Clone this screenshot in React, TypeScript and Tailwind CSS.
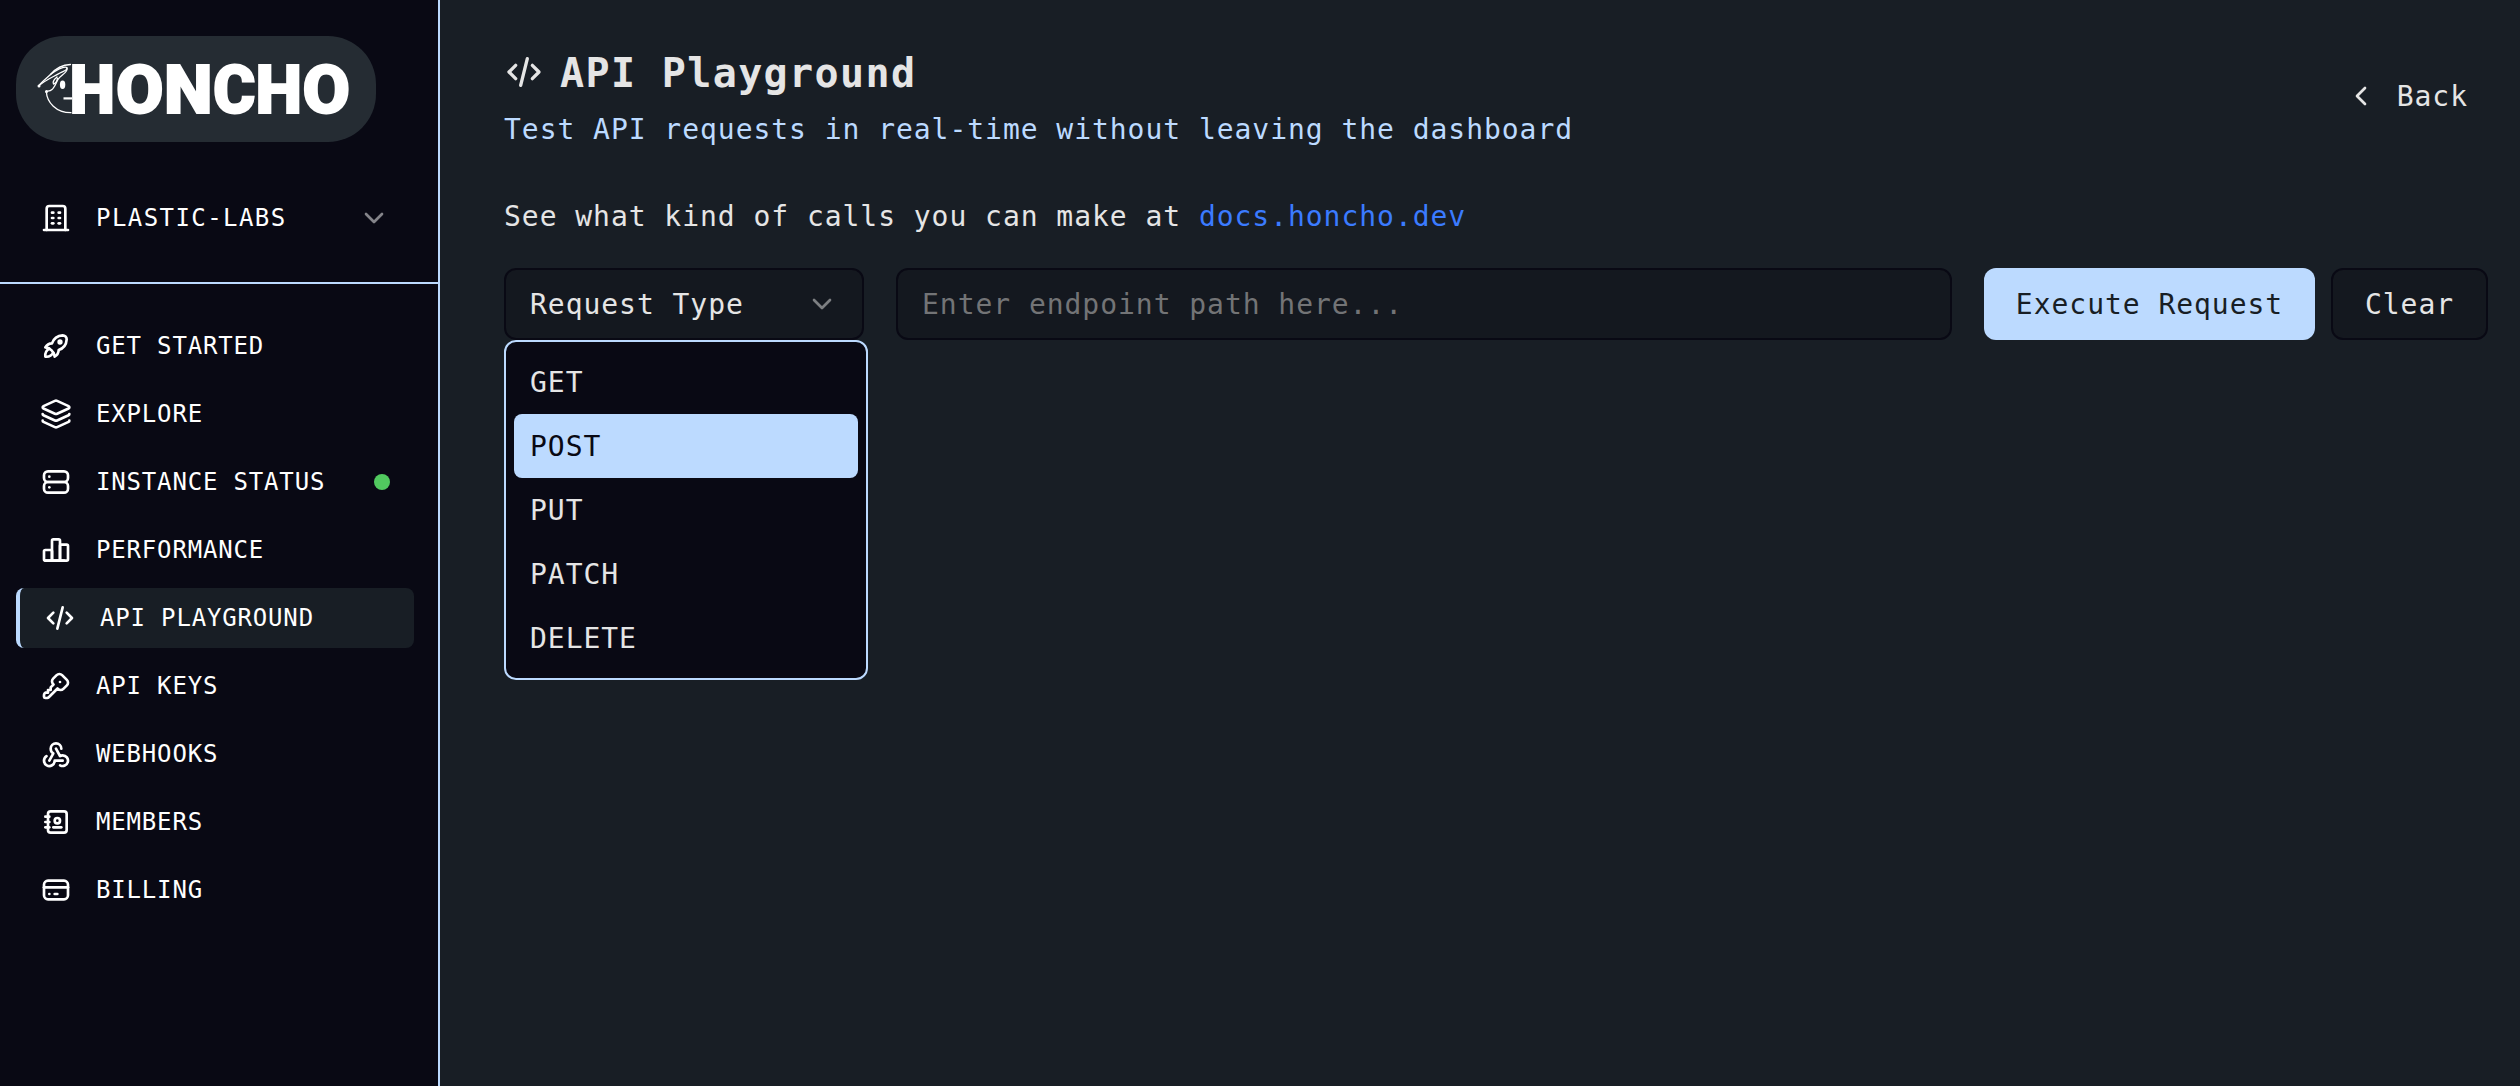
import React from "react";
import { Layers, ChevronDown, ChevronLeft } from "lucide-react";
import {
  TbBuilding,
  TbRocket,
  TbServer,
  TbChartBar,
  TbCode,
  TbKey,
  TbWebhook,
  TbAddressBook,
  TbCreditCard,
} from "react-icons/tb";

const MENU = ["GET", "POST", "PUT", "PATCH", "DELETE"];

type Item = { label: string; icon: React.ReactNode; active?: boolean; dot?: boolean };

const NAV: Item[] = [
  { label: "GET STARTED", icon: <TbRocket size={32} /> },
  { label: "EXPLORE", icon: <Layers size={32} strokeWidth={2} /> },
  { label: "INSTANCE STATUS", icon: <TbServer size={32} />, dot: true },
  { label: "PERFORMANCE", icon: <TbChartBar size={32} /> },
  { label: "API PLAYGROUND", icon: <TbCode size={32} />, active: true },
  { label: "API KEYS", icon: <TbKey size={32} /> },
  { label: "WEBHOOKS", icon: <TbWebhook size={32} /> },
  { label: "MEMBERS", icon: <TbAddressBook size={32} /> },
  { label: "BILLING", icon: <TbCreditCard size={32} /> },
];

const LETTERS = [
  { c: "H", x: 53.5, w: 45.5 },
  { c: "O", x: 100, w: 47.5 },
  { c: "N", x: 148, w: 48.5 },
  { c: "C", x: 197, w: 42.5 },
  { c: "H", x: 239.5, w: 46.5 },
  { c: "O", x: 286.5, w: 47.5 },
];

function Logo() {
  return (
    <svg width="360" height="106" viewBox="0 0 360 106" className="block">
      <g fill="none" stroke="#fff" strokeWidth="1.3" strokeLinecap="round" strokeLinejoin="round">
        <path d="M54.5 28.500C47 28.800 40 32 34.500 38.500C31 42 26 45.500 22.800 49.800" />
        <path d="M22.800 49.800C30 43.500 37 41 44 37C48 34.800 52 34 50.800 31.500C48 29.500 39 35 34.500 38.500" />
        <path d="M51 32C52.500 36.500 44 39.500 42 43.500C40 47 38.500 51.500 36 53.500C34 55.200 32 55 30.300 55.500" />
        <path d="M41 41C38 43.500 36.500 46 37.500 48C39.500 47.500 41 45 41.500 42.500" />
        <path d="M30.300 55.500C31 66.500 40 76.700 55 76.700" />
        <path d="M47.500 62.400H56" strokeWidth="2.200" strokeLinecap="butt" />
      </g>
      <circle cx="23" cy="50" r="1.500" fill="#fff" />
      <circle cx="30.500" cy="55.500" r="1.500" fill="#fff" />
      <ellipse cx="46.600" cy="48.800" rx="2.700" ry="4.200" fill="#fff" />
      <g fill="#fff" stroke="#fff" strokeWidth="1.800" fontFamily="Roboto" fontWeight="900" fontSize="67.500">
        {LETTERS.map((l, i) => (
          <text key={i} x={l.x} y="77" textLength={l.w} lengthAdjust="spacingAndGlyphs">
            {l.c}
          </text>
        ))}
      </g>
    </svg>
  );
}

function Sidebar() {
  return (
    <aside className="flex w-[440px] shrink-0 flex-col border-r-2 border-[#bcdaff] bg-[#090914] text-[24px] text-white">
      <div className="flex h-[284px] shrink-0 flex-col border-b-2 border-[#bcdaff] px-4 pt-9">
        <div className="h-[106px] w-[360px] shrink-0 rounded-[48px] bg-[#252c33]">
          <Logo />
        </div>
        <div className="mt-[46px] flex h-[60px] items-center gap-6 pr-8 pl-6 tracking-[1.43px]">
          <TbBuilding size={32} />
          <span>PLASTIC-LABS</span>
          <ChevronDown size={32} className="ml-auto opacity-50" />
        </div>
      </div>
      <nav className="flex flex-col gap-2 pt-8 pr-6 pl-4 tracking-[0.83px]">
        {NAV.map((n) => (
          <div
            key={n.label}
            className={
              n.active
                ? "flex h-[60px] items-center gap-6 rounded-lg border-l-4 border-[#bcdaff] bg-[#181e25] px-6"
                : "flex h-[60px] items-center gap-6 px-6"
            }
          >
            {n.icon}
            <span className="whitespace-nowrap">{n.label}</span>
            {n.dot && <span className="ml-auto size-4 rounded-full bg-[#51c95f]" />}
          </div>
        ))}
      </nav>
    </aside>
  );
}

export default function App() {
  return (
    <div className="flex h-[1086px] w-[2520px] overflow-hidden bg-[#181e25] [font-family:'DejaVu_Sans_Mono',monospace]">
      <Sidebar />
      <main className="flex min-w-0 flex-1 flex-col pt-12 pr-8 pl-16 text-[28px] tracking-[0.96px] text-[#e5e5e5]">
        <header className="flex h-24 items-start justify-between pr-5">
          <div>
            <h1 className="flex h-12 items-center gap-4 text-[40px] font-bold tracking-[1.37px]">
              <TbCode size={40} />
              <span className="translate-y-px">API Playground</span>
            </h1>
            <p className="mt-3 h-10 leading-[44px] text-[#bcdaff]">
              Test API requests in real-time without leaving the dashboard
            </p>
          </div>
          <button className="flex items-center gap-5 self-center">
            <ChevronLeft size={32} />
            <span className="translate-y-px">Back</span>
          </button>
        </header>
        <p className="mt-[52px] h-10 leading-[42px]">
          See what kind of calls you can make at <a className="text-[#3b7bff]">docs.honcho.dev</a>
        </p>
        <div className="mt-8 flex h-[72px] items-center gap-8">
          <div className="relative flex h-full w-[360px] items-center justify-between rounded-xl border-2 border-[#090914] bg-[#14181f] px-6">
            <span className="translate-y-px">Request Type</span>
            <ChevronDown size={32} className="opacity-50" />
            <div className="absolute top-[70px] -left-0.5 z-10 w-[364px] rounded-xl border-2 border-[#bcdaff] bg-[#090914] p-2">
              {MENU.map((m) => (
                <div
                  key={m}
                  className={
                    m === "POST"
                      ? "flex h-16 items-center rounded-lg bg-[#bcdaff] px-4 text-[#090914]"
                      : "flex h-16 items-center px-4"
                  }
                >
                  <span className="translate-y-px">{m}</span>
                </div>
              ))}
            </div>
          </div>
          <div className="flex h-full flex-1 items-center rounded-xl border-2 border-[#090914] bg-[#14181f] px-6 text-[#737476]">
            <span className="translate-y-px">Enter endpoint path here...</span>
          </div>
          <div className="flex h-full gap-4">
            <button className="w-[331px] rounded-xl bg-[#bcdaff] pt-0.5 text-[#181e25]">Execute Request</button>
            <button className="w-[157px] rounded-xl border-2 border-[#090914] bg-[#14181f] pt-0.5">Clear</button>
          </div>
        </div>
      </main>
    </div>
  );
}
